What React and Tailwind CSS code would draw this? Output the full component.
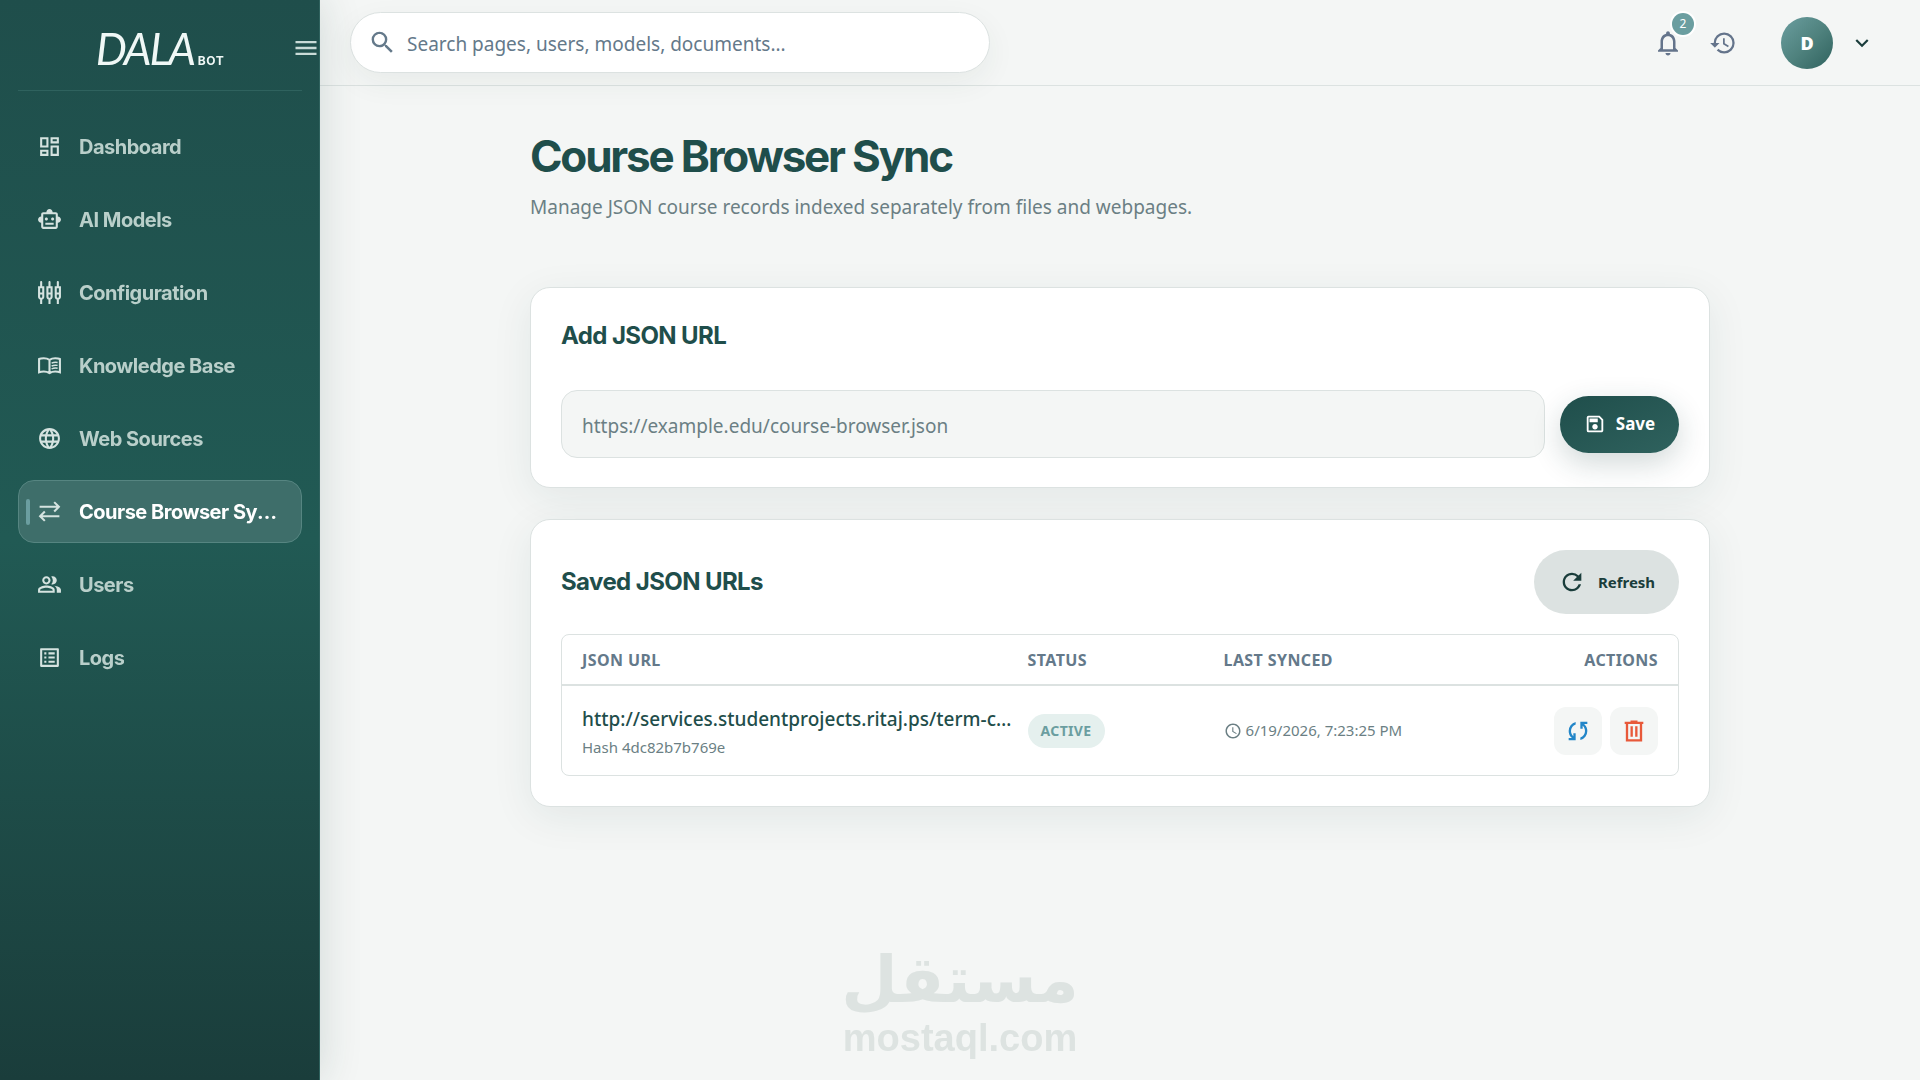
import {
    MdExpandMore,
    MdHistory,
    MdLanguage,
    MdMenu,
    MdNotificationsNone,
    MdOutlineDashboard,
    MdOutlineListAlt,
    MdOutlinePeopleAlt,
    MdOutlineSave,
    MdOutlineSettingsInputComponent,
    MdOutlineSmartToy,
    MdRefresh,
    MdSchedule,
    MdSearch,
} from "react-icons/md";
import clsx from "clsx";

const navItems = [
    { label: "Dashboard", icon: MdOutlineDashboard },
    { label: "AI Models", icon: MdOutlineSmartToy },
    { label: "Configuration", icon: MdOutlineSettingsInputComponent },
    { label: "Knowledge Base", icon: BookIcon },
    { label: "Web Sources", icon: MdLanguage },
    { label: "Course Browser Sync", icon: SwapIcon, active: true },
    { label: "Users", icon: MdOutlinePeopleAlt },
    { label: "Logs", icon: MdOutlineListAlt },
];

const savedUrls = [
    {
        url: "http://services.studentprojects.ritaj.ps/term-courses",
        hash: "4dc82b7b769e",
        status: "Active",
        lastSynced: "6/19/2026, 7:23:25 PM",
    },
];

function BookIcon({ className }) {
    return (
        <svg viewBox="0 0 24 24" fill="none" stroke="currentColor" strokeWidth="2" className={className} aria-hidden="true">
            <path d="M12 6.5C10.500 5.500 8.500 5 6.500 5S3 5.300 2 5.800V18.500C3.200 18 4.800 17.700 6.500 17.700S10.500 18.300 12 19.300C13.500 18.300 15.500 17.700 17.500 17.700S20.800 18 22 18.500V5.800C21 5.300 19.500 5 17.500 5S13.500 5.500 12 6.500ZM12 6.500V19" />
            <path strokeWidth="1.4" d="M14 9.700C15.800 8.900 17.800 8.700 19.800 9.100M14 12.500C15.800 11.700 17.800 11.500 19.800 11.900M14 15.300C15.800 14.500 17.800 14.300 19.800 14.700" />
        </svg>
    );
}

function SwapIcon({ className }) {
    return (
        <svg viewBox="0 0 24 24" fill="none" stroke="currentColor" strokeWidth="2" className={className} aria-hidden="true">
            <path d="M2.500 7.500H21M16.500 3L21 7.500L16.500 12M21.500 16.500H3M7.500 12L3 16.500L7.500 21" />
        </svg>
    );
}

function SyncIcon({ className }) {
    return (
        <svg viewBox="0 -960 960 960" fill="currentColor" className={className} aria-hidden="true">
            <path d="M160-160v-80h110l-16-14q-52-46-73-105t-21-119q0-111 66.5-197.5T400-790v84q-72 26-116 88.5T240-478q0 45 17 87.5t53 78.5l10 10v-98h80v240H160Zm400-10v-84q72-26 116-88.5T720-482q0-45-17-87.5T650-648l-10-10v98h-80v-240h240v80H690l16 14q49 49 71.5 106.5T800-482q0 111-66.5 197.5T560-170Z" />
        </svg>
    );
}

function TrashIcon({ className }) {
    return (
        <svg viewBox="0 -960 960 960" fill="currentColor" className={className} aria-hidden="true">
            <path d="M200-120v-600h-40v-80h200v-40h240v40h200v80h-40v600H200Zm80-80h400v-520H280v520Zm80-80h80v-360h-80v360Zm160 0h80v-360h-80v360Z" />
        </svg>
    );
}

function NavItem({ label, icon: Icon, active }) {
    return (
        <a
            href="#"
            aria-current={active ? "page" : undefined}
            className={clsx(
                "relative flex h-[63px] items-center gap-[17px] rounded-2xl border pr-[22px] pl-[18px] font-['Inter',sans-serif] text-xl font-bold tracking-tight",
                active ? "border-[#568581] bg-[#3e6e6a] text-white" : "border-transparent text-[#b9cfca]"
            )}
        >
            {active && <span className="absolute left-[7px] h-[26px] w-1 rounded-full bg-[#6b9ea0]" />}
            <Icon className="size-[25px] shrink-0 text-[#d5e3e0]" />
            <span className="truncate">{label}</span>
        </a>
    );
}

function Sidebar() {
    return (
        <aside className="z-10 flex w-80 shrink-0 flex-col border-r border-[#2f625e] bg-linear-to-b from-[#1f4e4b] via-[#215a54] to-[#1a3d3b] pr-[17px] pl-[18px] shadow-[0_0_40px_rgba(26,61,59,0.16)]">
            <div className="relative flex h-[91px] items-center justify-center border-b border-[#2f625e] pt-1.5">
                <div className="flex items-baseline gap-1 text-[#f0f8f6]">
                    <span className="font-['Lato',sans-serif] text-[44px] tracking-tighter italic">DALA</span>
                    <span className="font-['Inter',sans-serif] text-xs font-bold tracking-wider">BOT</span>
                </div>
                <button type="button" aria-label="Toggle menu" className="absolute -right-[18px] text-[#c9dbd7]">
                    <MdMenu className="size-7" />
                </button>
            </div>
            <nav className="mt-6 flex flex-col gap-2.5">
                {navItems.map((item) => (
                    <NavItem key={item.label} {...item} />
                ))}
            </nav>
        </aside>
    );
}

function Topbar() {
    return (
        <header className="flex h-[86px] items-center justify-between border-b border-[#dce2e1] pr-[45px] pl-[30px]">
            <label className="flex h-[61px] w-[640px] items-center gap-2.5 rounded-full border border-[#dce2e1] bg-white px-[17px] shadow-[0_10px_30px_rgba(26,61,59,0.06)]">
                <MdSearch className="size-[29px] shrink-0 text-[#64798a]" />
                <input
                    type="search"
                    aria-label="Search"
                    placeholder="Search pages, users, models, documents..."
                    className="w-full bg-transparent pt-1 text-[19px] outline-none placeholder:text-[#64798a]"
                />
            </label>

            <div className="flex items-center text-[#64748b]">
                <button type="button" aria-label="Notifications" className="relative mr-[26px]">
                    <MdNotificationsNone className="size-[30px]" />
                    <span className="absolute -top-[15px] left-[19px] flex size-[22px] items-center justify-center rounded-full bg-[#6b9ea0] text-xs text-white ring-2 ring-white">
                        2
                    </span>
                </button>
                <button type="button" aria-label="History" className="mr-11">
                    <MdHistory className="size-7" />
                </button>
                <button type="button" aria-label="Account" className="flex items-center gap-4 text-[#1a3d3b]">
                    <span className="flex size-[52px] items-center justify-center rounded-full bg-linear-to-br from-[#6b9ea0] via-[#50837f] to-[#2f625e] text-lg font-black text-white">
                        D
                    </span>
                    <MdExpandMore className="size-[26px]" />
                </button>
            </div>
        </header>
    );
}

function Card({ children }) {
    return (
        <section className="rounded-[20px] border border-[#dce2e1] bg-white px-[30px] shadow-[0_10px_40px_rgba(26,61,59,0.08)]">
            {children}
        </section>
    );
}

function CardTitle({ children }) {
    return (
        <h2 className="font-['Inter',sans-serif] text-2xl leading-9 font-bold tracking-tight text-[#1f4e4b]">{children}</h2>
    );
}

function AddUrlCard() {
    return (
        <Card>
            <div className="pt-[30px]">
                <CardTitle>Add JSON URL</CardTitle>
            </div>
            <form className="flex items-center gap-[15px] pt-9 pb-[29px]">
                <input
                    type="url"
                    aria-label="JSON URL"
                    placeholder="https://example.edu/course-browser.json"
                    className="h-[68px] min-w-0 grow rounded-2xl border border-[#dce2e1] bg-[#f4f6f5] px-5 pt-1 text-[19px] outline-none placeholder:text-[#6b7f84]"
                />
                <button
                    type="button"
                    className="flex h-[57px] w-[119px] items-center justify-center gap-2.5 rounded-full bg-linear-to-br from-[#1f4e4b] to-[#2f625e] text-[17px] font-bold text-white shadow-[0_10px_30px_rgba(26,61,59,0.2)]"
                >
                    <MdOutlineSave className="size-[22px]" />
                    Save
                </button>
            </form>
        </Card>
    );
}

function SavedUrlsCard() {
    return (
        <Card>
            <div className="flex items-center justify-between pt-[30px] pb-5">
                <CardTitle>Saved JSON URLs</CardTitle>
                <button
                    type="button"
                    className="flex h-16 w-[145px] items-center justify-center gap-3 rounded-full bg-[#dce2e1] text-[15px] font-bold text-[#1a3d3b]"
                >
                    <MdRefresh className="size-7" />
                    Refresh
                </button>
            </div>

            <div className="mb-[30px] overflow-hidden rounded-lg border border-[#dce2e1]">
                <table className="w-full table-fixed text-left">
                    <thead>
                        <tr className="h-[50px] border-b-2 border-[#dce2e1] text-base tracking-wide text-[#64798a] uppercase">
                            <th className="w-[41%] pr-2 pl-5 font-bold">JSON URL</th>
                            <th className="w-[196px] px-2 font-bold">Status</th>
                            <th className="px-2 font-bold">Last Synced</th>
                            <th className="w-1/5 pr-5 pl-2 text-right font-bold">Actions</th>
                        </tr>
                    </thead>
                    <tbody>
                        {savedUrls.map((row) => (
                            <tr key={row.hash} className="h-[90px]">
                                <td className="pt-1 pr-2 pl-5">
                                    <p className="truncate text-[19px] leading-7 font-medium text-[#1f4e4b]">{row.url}</p>
                                    <p className="text-[15px] leading-7 text-[#6b7f84]">Hash {row.hash}</p>
                                </td>
                                <td className="px-2">
                                    <span className="inline-flex h-[34px] items-center rounded-full bg-[#e5f0ee] px-[13px] text-sm font-bold tracking-wide text-[#6b9ea0] uppercase">
                                        {row.status}
                                    </span>
                                </td>
                                <td className="px-2">
                                    <div className="flex items-center gap-1 text-[15px] text-[#6b7f84]">
                                        <MdSchedule className="size-[18px] shrink-0" />
                                        {row.lastSynced}
                                    </div>
                                </td>
                                <td className="pr-5 pl-2">
                                    <div className="flex justify-end gap-2">
                                        <button
                                            type="button"
                                            aria-label="Sync"
                                            className="flex size-12 items-center justify-center rounded-xl bg-[#f4f6f5] text-[#2386c8]"
                                        >
                                            <SyncIcon className="size-7" />
                                        </button>
                                        <button
                                            type="button"
                                            aria-label="Delete"
                                            className="flex size-12 items-center justify-center rounded-xl bg-[#f4f6f5] text-[#e8593a]"
                                        >
                                            <TrashIcon className="size-7" />
                                        </button>
                                    </div>
                                </td>
                            </tr>
                        ))}
                    </tbody>
                </table>
            </div>
        </Card>
    );
}

export default function App() {
    return (
        <div className="flex min-h-screen bg-[#f4f6f5] font-['Noto_Sans',sans-serif]">
            <Sidebar />
            <div className="flex min-w-0 grow flex-col">
                <Topbar />
                <main className="mx-auto w-full max-w-[1180px] pt-[41px]">
                    <h1 className="font-['Inter',sans-serif] text-[44px] leading-[58px] font-bold tracking-tighter text-[#1f4e4b]">
                        Course Browser Sync
                    </h1>
                    <p className="mt-2 text-[19px] leading-7 text-[#6b7f84]">
                        Manage JSON course records indexed separately from files and webpages.
                    </p>
                    <div className="mt-[66px] flex flex-col gap-[31px]">
                        <AddUrlCard />
                        <SavedUrlsCard />
                    </div>
                </main>
            </div>

            {/* watermark */}
            <div className="pointer-events-none fixed inset-x-0 bottom-[22px] flex flex-col items-center text-[#dde3e1]">
                <span lang="ar" dir="rtl" className="font-['DejaVu_Sans',sans-serif] text-[65px] leading-[76px] font-bold">
                    مستقل
                </span>
                <span className="font-['Liberation_Sans',sans-serif] text-[38px] leading-10 font-bold">mostaql.com</span>
            </div>
        </div>
    );
}
